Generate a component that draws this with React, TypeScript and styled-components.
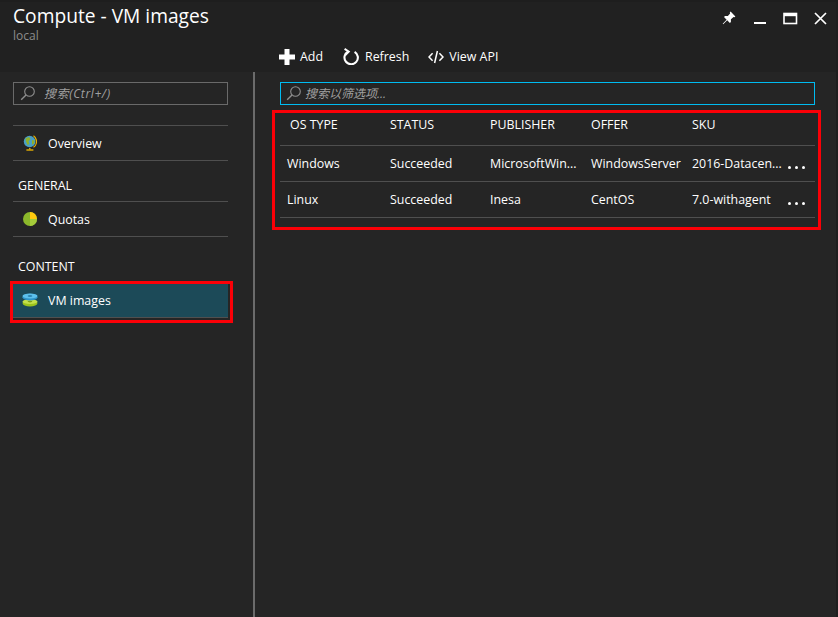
import styled, { createGlobalStyle } from 'styled-components';

const GlobalStyle = createGlobalStyle`
  html, body {
    margin: 0;
    padding: 0;
    background: #1e1e1e;
  }
  * {
    box-sizing: border-box;
  }
`;

const Page = styled.div`
  width: 838px;
  height: 617px;
  padding: 2px 2px 0 0;
  background: #1e1e1e;
  overflow: hidden;
  font-family: 'Open Sans', 'Noto Sans CJK SC', sans-serif;
  font-size: 12.4px;
  color: #fff;
`;

const Blade = styled.div`
  display: flex;
  flex-direction: column;
  height: 100%;
  background: #252525;
`;

const Header = styled.header`
  display: flex;
  flex-direction: column;
  flex: none;
  height: 70px;
  background: #212121;
`;

const TitleRow = styled.div`
  display: flex;
  justify-content: space-between;
  align-items: flex-start;
  height: 41px;
  padding-left: 13px;
`;

const Title = styled.h1`
  margin: 1px 0 0;
  font-size: 19.2px;
  font-weight: 400;
  line-height: 26px;
`;

const Subtitle = styled.div`
  color: #8c8c8c;
  font-size: 12px;
  line-height: 14px;
`;

const WindowButtons = styled.div`
  display: flex;
  align-items: center;
  gap: 16px;
  padding: 9px 9px 0 0;
`;

const CommandBar = styled.div`
  display: flex;
  align-items: center;
  gap: 19px;
  height: 27px;
  padding-left: 279px;
`;

const Command = styled.div<{ $first?: boolean }>`
  display: flex;
  align-items: center;
  gap: 5px;
  margin-right: ${(p) => (p.$first ? '1px' : '0')};
`;

const Body = styled.div`
  display: flex;
  flex: 1;
  min-height: 0;
`;

const Sidebar = styled.nav`
  flex: none;
  width: 255px;
  padding: 10px 0 0 10px;
  border-right: 2px solid #6b6b6b;
`;

const SearchBox = styled.div<{ $focused?: boolean }>`
  display: flex;
  align-items: center;
  gap: ${(p) => (p.$focused ? '3px' : '8px')};
  height: 23px;
  padding: 0 0 2px ${(p) => (p.$focused ? '5px' : '6px')};
  border: 1px solid ${(p) => (p.$focused ? '#00bcf2' : '#6a6a6a')};
  color: #a0a0a0;
  font-size: 12px;
  font-style: italic;
`;

const SideSearch = styled(SearchBox)`
  width: 215px;
  margin: 0 0 20px 3px;
  letter-spacing: 0.6px;
`;

const MenuGroup = styled.div`
  width: 215px;
  margin-left: 3px;
  border-top: 1px solid #4f4f4f;
`;

const MenuItem = styled.div<{ $selected?: boolean }>`
  display: flex;
  align-items: center;
  gap: 10px;
  height: ${(p) => (p.$selected ? '34px' : '35px')};
  padding: 0 0 ${(p) => (p.$selected ? '1px' : '0')} 9px;
  border-bottom: 1px solid #4f4f4f;
  background: ${(p) => (p.$selected ? '#1c4a58' : 'transparent')};
`;

const IconSlot = styled.span`
  display: flex;
  justify-content: center;
  width: 16px;
`;

const SectionTitle = styled.div<{ $first?: boolean }>`
  margin: ${(p) => (p.$first ? '17px' : '22px')} 0 0 8px;
  height: ${(p) => (p.$first ? '23px' : '22px')};
  line-height: 16px;
`;

const Highlight = styled.div`
  width: 223px;
  padding: 0 2px 2px 0;
  border: 3px solid #fb0007;
`;

const SelectedGroup = styled.div`
  width: 215px;
`;

const Main = styled.main`
  flex: 1;
  min-width: 0;
  padding: 10px 0 0 17px;
`;

const FilterBox = styled(SearchBox)`
  width: 535px;
  margin: 0 0 5px 8px;
`;

const TableFrame = styled.div`
  width: 549px;
  padding: 0 3px 9px 5px;
  border: 3px solid #fb0007;
`;

const Row = styled.div<{ $head?: boolean }>`
  display: grid;
  grid-template-columns: 110px 100px 101px 101px 92px 31px;
  align-items: center;
  height: ${(p) => (p.$head ? '33px' : '36px')};
  padding-bottom: ${(p) => (p.$head ? '10px' : '0')};
  border-bottom: 1px solid #4f4f4f;
`;

const Cell = styled.div`
  white-space: nowrap;
`;

const HeadFirstCell = styled(Cell)`
  padding-left: 10px;
`;

const FirstCell = styled(Cell)`
  padding-left: 7px;
`;

const Dots = styled.div`
  display: flex;
  gap: 4px;
  padding: 7px 0 0 4px;
`;

const Dot = styled.span`
  width: 3px;
  height: 3px;
  border-radius: 50%;
  background: #fff;
`;

const SearchIcon = () => (
  <svg width="16" height="16" viewBox="0 0 16 16" fill="none" stroke="#8f8f8f" strokeWidth="1.1">
    <circle cx="9.5" cy="6.5" r="4.8" />
    <path d="M6 10 1.2 14.8" strokeWidth="1.4" />
  </svg>
);

const PinIcon = () => (
  <svg width="16" height="14" viewBox="0 0 16 14" fill="#fff">
    <path d="M8.6.6 13.4 5.4 12.5 6.2 11.6 5.9 8.9 8.2 8.9 11.1 7.9 12 5.2 9.3 1.2 13.2.7 12.7 4.6 8.7 2 6 3 5.1 5.9 5.1 8.1 2.4 7.8 1.4Z" />
  </svg>
);

const MinimizeIcon = () => (
  <svg width="13" height="13" viewBox="0 0 13 13" fill="#fff">
    <rect x="0" y="10" width="12" height="2" />
  </svg>
);

const MaximizeIcon = () => (
  <svg width="15" height="13" viewBox="0 0 15 13" fill="none" stroke="#fff">
    <rect x="1" y="1.5" width="12.5" height="10" strokeWidth="1.6" />
    <path d="M1 3h12.5" strokeWidth="2.4" />
  </svg>
);

const CloseIcon = () => (
  <svg width="13" height="13" viewBox="0 0 13 13" stroke="#fff" strokeWidth="1.7">
    <path d="M1 1 12 12M12 1 1 12" />
  </svg>
);

const PlusIcon = () => (
  <svg width="16" height="16" viewBox="0 0 16 16" fill="#fff">
    <path d="M5.5 0h5v5.5H16v5h-5.5V16h-5v-5.500H0v-5h5.500Z" />
  </svg>
);

const RefreshIcon = () => (
  <svg width="17" height="17" viewBox="0 0 17 17" fill="none" stroke="#fff" strokeWidth="2.1">
    <path d="M11.6 3.8a6.7 6.7 0 1 1-6.7-.1" />
    <path d="M1.6 .9 5.8 3.7 2.4 7" strokeWidth="1.9" />
  </svg>
);

const CodeIcon = () => (
  <svg width="16" height="14" viewBox="0 0 16 14" fill="none" stroke="#fff" strokeWidth="1.5">
    <path d="M4.6 3.2 1 7l3.6 3.8M11.4 3.2 15 7l-3.6 3.8M9.4 1 6.6 13" />
  </svg>
);

const GlobeIcon = () => (
  <svg width="14" height="16" viewBox="0 0 14 16">
    <circle cx="6.6" cy="6.5" r="5.8" fill="#4a9fc4" />
    <path d="M2.5 3.5 6 2l1.5 2-2 2.5L6.5 9 4.5 10 3 6.5ZM9 5l2.6.5-.6 3-2 1.2Z" fill="#8db02c" />
    <path d="M10.5.8a6.8 6.8 0 0 1 0 11.4" fill="none" stroke="#e8b000" strokeWidth="1.1" />
    <path d="M6.8 13v1.4" stroke="#e8b000" strokeWidth="1.4" />
    <path d="M3.4 15h7" stroke="#e8b000" strokeWidth="1.4" />
  </svg>
);

const PieIcon = () => (
  <svg width="14" height="14" viewBox="0 0 14 14">
    <circle cx="7" cy="7" r="7" fill="#8cb82b" />
    <path d="M7 0a7 7 0 0 1 7 7H7Z" fill="#ffc90e" />
    <path d="M7 7h7a7 7 0 0 1-7 7Z" fill="#a5cc3a" />
  </svg>
);

const DisksIcon = () => (
  <svg width="16" height="14" viewBox="0 0 16 14">
    <ellipse cx="8" cy="10" rx="7.5" ry="3.6" fill="#9bc31c" />
    <ellipse cx="8" cy="8.6" rx="7.5" ry="2.4" fill="#c4e04a" />
    <ellipse cx="8" cy="8.6" rx="2.4" ry=".8" fill="#7fa015" />
    <ellipse cx="8" cy="4.2" rx="7.5" ry="3.4" fill="#2e94c8" />
    <ellipse cx="8" cy="3" rx="7.5" ry="2.4" fill="#5cc0ec" />
    <ellipse cx="8" cy="3" rx="2.4" ry=".8" fill="#1c6f9c" />
  </svg>
);

const images = [
  { os: 'Windows', status: 'Succeeded', publisher: 'MicrosoftWin...', offer: 'WindowsServer', sku: '2016-Datacen...' },
  { os: 'Linux', status: 'Succeeded', publisher: 'Inesa', offer: 'CentOS', sku: '7.0-withagent' },
];

const App = () => (
  <>
    <GlobalStyle />
    <Page>
      <Blade>
        <Header>
          <TitleRow>
            <div>
              <Title>Compute - VM images</Title>
              <Subtitle>local</Subtitle>
            </div>
            <WindowButtons>
              <PinIcon />
              <MinimizeIcon />
              <MaximizeIcon />
              <CloseIcon />
            </WindowButtons>
          </TitleRow>
          <CommandBar>
            <Command $first><PlusIcon />Add</Command>
            <Command><RefreshIcon />Refresh</Command>
            <Command><CodeIcon />View API</Command>
          </CommandBar>
        </Header>
        <Body>
          <Sidebar>
            <SideSearch>
              <SearchIcon />
              搜索(Ctrl+/)
            </SideSearch>
            <MenuGroup>
              <MenuItem><IconSlot><GlobeIcon /></IconSlot>Overview</MenuItem>
            </MenuGroup>
            <SectionTitle $first>GENERAL</SectionTitle>
            <MenuGroup>
              <MenuItem><IconSlot><PieIcon /></IconSlot>Quotas</MenuItem>
            </MenuGroup>
            <SectionTitle>CONTENT</SectionTitle>
            <Highlight>
              <SelectedGroup>
                <MenuItem $selected><IconSlot><DisksIcon /></IconSlot>VM images</MenuItem>
              </SelectedGroup>
            </Highlight>
          </Sidebar>
          <Main>
            <FilterBox $focused>
              <SearchIcon />
              搜索以筛选项...
            </FilterBox>
            <TableFrame>
              <Row $head>
                <HeadFirstCell>OS TYPE</HeadFirstCell>
                <Cell>STATUS</Cell>
                <Cell>PUBLISHER</Cell>
                <Cell>OFFER</Cell>
                <Cell>SKU</Cell>
              </Row>
              {images.map((image) => (
                <Row key={image.os}>
                  <FirstCell>{image.os}</FirstCell>
                  <Cell>{image.status}</Cell>
                  <Cell>{image.publisher}</Cell>
                  <Cell>{image.offer}</Cell>
                  <Cell>{image.sku}</Cell>
                  <Dots><Dot /><Dot /><Dot /></Dots>
                </Row>
              ))}
            </TableFrame>
          </Main>
        </Body>
      </Blade>
    </Page>
  </>
);

export default App;
